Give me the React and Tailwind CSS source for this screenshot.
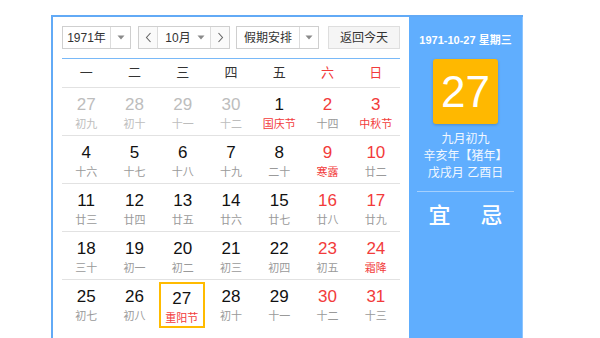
import React from "react";

const F = { fontFamily: '"Liberation Sans","Noto Sans CJK SC",sans-serif' };

const weeks = [
  [
    ["27", "初九", "o"], ["28", "初十", "o"], ["29", "十一", "o"], ["30", "十二", "o"],
    ["1", "国庆节", "nf"], ["2", "十四", "w"], ["3", "中秋节", "wf"],
  ],
  [
    ["4", "十六", "n"], ["5", "十七", "n"], ["6", "十八", "n"], ["7", "十九", "n"],
    ["8", "二十", "n"], ["9", "寒露", "wf"], ["10", "廿二", "w"],
  ],
  [
    ["11", "廿三", "n"], ["12", "廿四", "n"], ["13", "廿五", "n"], ["14", "廿六", "n"],
    ["15", "廿七", "n"], ["16", "廿八", "w"], ["17", "廿九", "w"],
  ],
  [
    ["18", "三十", "n"], ["19", "初一", "n"], ["20", "初二", "n"], ["21", "初三", "n"],
    ["22", "初四", "n"], ["23", "初五", "w"], ["24", "霜降", "wf"],
  ],
  [
    ["25", "初七", "n"], ["26", "初八", "n"], ["27", "重阳节", "sel"], ["28", "初十", "n"],
    ["29", "十一", "n"], ["30", "十二", "w"], ["31", "十三", "w"],
  ],
];

function Caret() {
  return (
    <svg width="8" height="5" viewBox="0 0 8 5">
      <path d="M0.5 0.5 L7.5 0.5 L4 4.5 Z" fill="#8a8a8a" />
    </svg>
  );
}

function Chevron({ dir }) {
  return (
    <svg width="7" height="11" viewBox="0 0 7 11">
      <path
        d={dir === "l" ? "M5.5 1 L1.5 5.5 L5.5 10" : "M1.5 1 L5.5 5.5 L1.5 10"}
        fill="none"
        stroke="#666"
        strokeWidth="1.1"
      />
    </svg>
  );
}

function Cell({ d }) {
  const [num, lunar, t] = d;
  let numC = "text-[#111]";
  let lunC = "text-[#9a9a9a]";
  if (t === "o") { numC = "text-[#bdbdbd]"; lunC = "text-[#bdbdbd]"; }
  if (t === "nf") lunC = "text-[#f23b3b]";
  if (t === "w") numC = "text-[#f23b3b]";
  if (t === "wf") { numC = "text-[#f23b3b]"; lunC = "text-[#f23b3b]"; }
  if (t === "sel") lunC = "text-[#f23b3b]";
  const inner = (
    <>
      <div className={`text-[17px] leading-[20px] ${numC}`}>{num}</div>
      <div className={`text-[11px] leading-[14px] mt-[2px] ${lunC}`}>{lunar}</div>
    </>
  );
  if (t === "sel") {
    return (
      <div className="flex h-full pt-[2px] pr-[2px]">
        <div className="flex-1 flex flex-col items-center border-2 border-[#ffbb00] pt-[5px]">
          {inner}
        </div>
      </div>
    );
  }
  return <div className="flex flex-col items-center pt-[7px] h-full">{inner}</div>;
}

export default function App() {
  const days = ["一", "二", "三", "四", "五", "六", "日"];
  return (
    <div className="w-[600px] h-[338px] overflow-hidden bg-white" style={F}>
      <div className="pl-[51px] pt-[15px]">
        <div className="flex w-[472px] h-[340px] border-2 border-r-0 border-[#62aaf6]">
          {/* left */}
          <div className="w-[356px] pl-[9px] pt-[9px]">
            <div className="flex items-center h-[23px] text-[12px] text-[#333]">
              <div className="flex h-[23px] w-[69px] border border-[#cfcfcf]">
                <div className="w-[48px] flex items-center justify-center border-r border-[#dcdcdc]">1971年</div>
                <div className="flex-1 flex items-center justify-center"><Caret /></div>
              </div>
              <div className="flex h-[23px] w-[92px] ml-[7px] border border-[#cfcfcf]">
                <div className="w-[19px] flex items-center justify-center border-r border-[#dcdcdc] bg-[#fafafa]"><Chevron dir="l" /></div>
                <div className="flex-1 flex items-center justify-center gap-[6px] pl-[2px]">
                  <span>10月</span>
                  <Caret />
                </div>
                <div className="w-[19px] flex items-center justify-center border-l border-[#dcdcdc] bg-[#fafafa]"><Chevron dir="r" /></div>
              </div>
              <div className="flex h-[23px] w-[83px] ml-[6px] border border-[#cfcfcf]">
                <div className="w-[63px] flex items-center justify-center border-r border-[#dcdcdc]">假期安排</div>
                <div className="flex-1 flex items-center justify-center"><Caret /></div>
              </div>
              <div className="flex h-[23px] w-[72px] ml-[9px] items-center justify-center border border-[#dedede] bg-[#f5f5f5]">
                返回今天
              </div>
            </div>
            <div className="w-[338px] mt-[9px] border-t border-[#79b9f8]"></div>
            <div className="grid grid-cols-7 w-[338px] h-[29px] items-center text-[13px] border-b border-[#e2e2e2]">
              {days.map((d, i) => (
                <div key={d} className={`text-center ${i >= 5 ? "text-[#f23b3b]" : "text-[#333]"}`}>{d}</div>
              ))}
            </div>
            {weeks.map((w, ri) => (
              <div
                key={ri}
                className={`grid grid-cols-7 w-[338px] h-[48px] ${ri < 4 ? "border-b border-[#e2e2e2]" : ""}`}
              >
                {w.map((d, ci) => (
                  <Cell key={ci} d={d} />
                ))}
              </div>
            ))}
          </div>
          {/* right */}
          <div className="w-[114px] bg-[#60aefe] border-r border-[#8cc5ff] flex flex-col items-center text-white">
            <div className="mt-[15px] text-[11px] leading-[16px] font-bold">1971-10-27 星期三</div>
            <div className="mt-[11px] w-[65px] h-[65px] rounded-[3px] bg-[#ffb800] shadow-[0_1px_3px_rgba(0,0,0,0.2)] flex items-center justify-center text-[44px] leading-none">
              27
            </div>
            <div className="mt-[7px] text-[12px] leading-[17px] text-center text-[#f2f8ff]">
              <div>九月初九</div>
              <div>辛亥年【猪年】</div>
              <div>戊戌月 乙酉日</div>
            </div>
            <div className="mt-[9px] w-[97px] border-t border-[#a5d0fd]"></div>
            <div className="mt-[11px] flex gap-[30px] text-[22px] leading-[26px] font-medium">
              <span>宜</span>
              <span>忌</span>
            </div>
          </div>
        </div>
      </div>
    </div>
  );
}
